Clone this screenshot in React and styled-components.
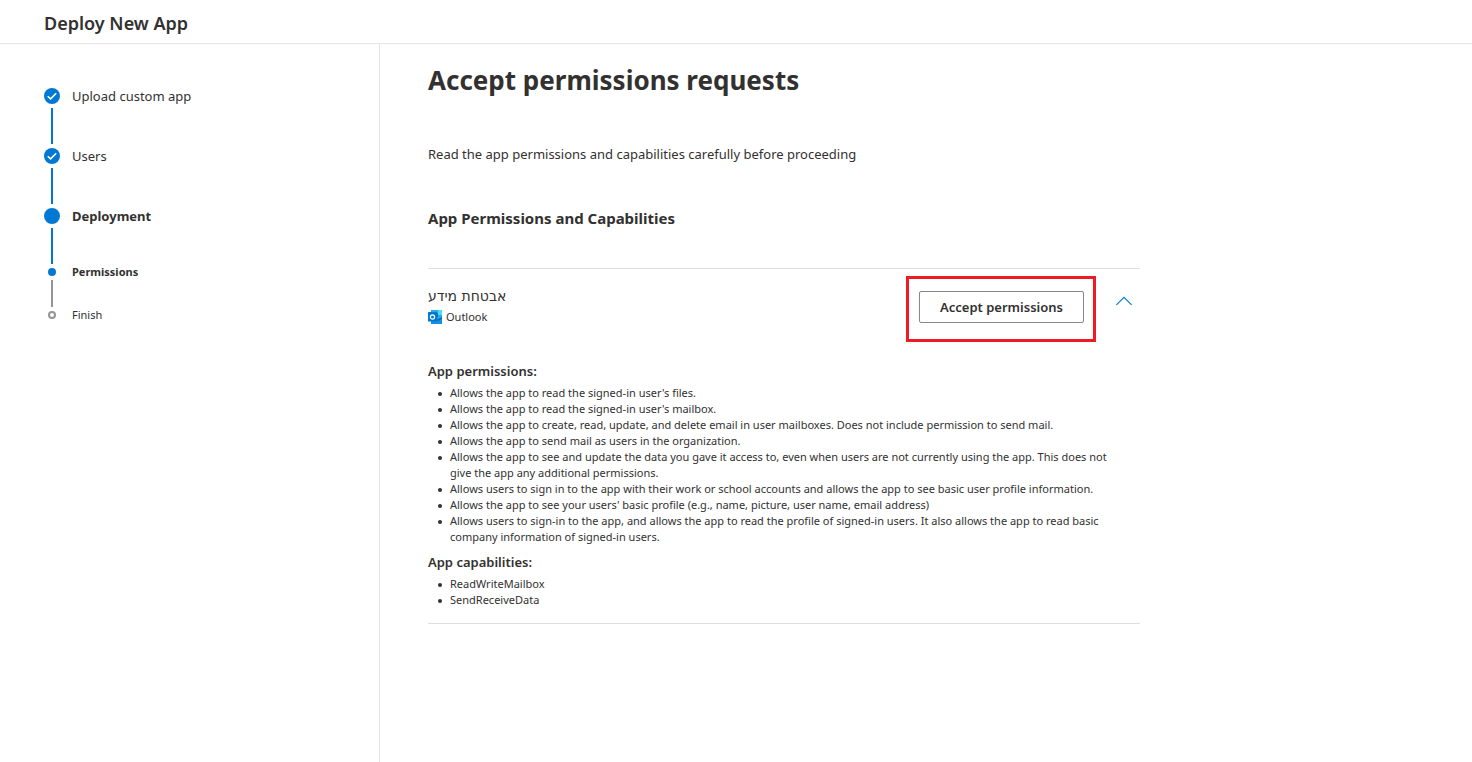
import React, { useState } from 'react';
import styled, { createGlobalStyle } from 'styled-components';

const steps = [
  { label: 'Upload custom app', state: 'done' },
  { label: 'Users', state: 'done' },
  { label: 'Deployment', state: 'current' },
  { label: 'Permissions', state: 'current', sub: true },
  { label: 'Finish', state: 'pending', sub: true },
];

const permissions = [
  "Allows the app to read the signed-in user's files.",
  "Allows the app to read the signed-in user's mailbox.",
  'Allows the app to create, read, update, and delete email in user mailboxes. Does not include permission to send mail.',
  'Allows the app to send mail as users in the organization.',
  'Allows the app to see and update the data you gave it access to, even when users are not currently using the app. This does not give the app any additional permissions.',
  'Allows users to sign in to the app with their work or school accounts and allows the app to see basic user profile information.',
  "Allows the app to see your users' basic profile (e.g., name, picture, user name, email address)",
  'Allows users to sign-in to the app, and allows the app to read the profile of signed-in users. It also allows the app to read basic company information of signed-in users.',
];

const capabilities = ['ReadWriteMailbox', 'SendReceiveData'];

const CheckIcon = () => (
  <svg width="16" height="16" viewBox="0 0 16 16" aria-hidden="true">
    <circle cx="8" cy="8" r="8" fill="#0078d4" />
    <path d="M3.7 8.2 6.6 10.9 12.2 5.3" fill="none" stroke="#fff" strokeWidth="1.5" />
  </svg>
);

const OutlookIcon = () => (
  <svg width="14" height="14" viewBox="0 0 14 14" aria-hidden="true">
    <path d="M3 0h11v14H3z" fill="#1490df" />
    <path d="M3 0h7v3H3z" fill="#28a8ea" />
    <path d="M10 0h4v5h-4z" fill="#50d9ff" />
    <path d="M8 3h2v4H8z" fill="#0078d4" />
    <path d="M10 5h4v2l-4 3z" fill="#28a8ea" />
    <path d="M14 7v1.5L10 11l-1-1z" fill="#0a5ea8" />
    <rect y="2" width="9" height="9.5" rx="0.6" fill="#0078d4" />
    <circle cx="4.5" cy="7" r="2.1" fill="none" stroke="#fff" strokeWidth="1.2" />
  </svg>
);

const ChevronIcon = ({ open }) => (
  <svg width="16" height="10" viewBox="0 0 16 10" aria-hidden="true">
    <path
      d={open ? 'M0.4 8.9 8 1.3l7.6 7.6' : 'M0.4 1.3 8 8.9l7.6-7.6'}
      fill="none"
      stroke="#0078d4"
      strokeWidth="1.1"
    />
  </svg>
);

const App = () => {
  const [open, setOpen] = useState(true);

  return (
    <Page>
      <GlobalStyle />
      <Header>
        <HeaderTitle>Deploy New App</HeaderTitle>
      </Header>
      <Body>
        <Sidebar>
          <StepList>
            {steps.map((step) => (
              <Step key={step.label} $sub={step.sub} $state={step.state}>
                <Marker>
                  {step.state === 'done' ? <CheckIcon /> : <Dot $sub={step.sub} $state={step.state} />}
                </Marker>
                {step.label}
              </Step>
            ))}
          </StepList>
        </Sidebar>
        <Main>
          <Title>Accept permissions requests</Title>
          <Intro>Read the app permissions and capabilities carefully before proceeding</Intro>
          <SectionTitle>App Permissions and Capabilities</SectionTitle>
          <AppCard>
            <CardHeader>
              <AppInfo>
                <AppName lang="he" dir="rtl">אבטחת מידע</AppName>
                <Host>
                  <OutlookIcon />
                  Outlook
                </Host>
              </AppInfo>
              <Highlight>
                <AcceptButton type="button">Accept permissions</AcceptButton>
              </Highlight>
              <ToggleButton
                type="button"
                aria-label="Toggle details"
                aria-expanded={open}
                onClick={() => setOpen(!open)}
              >
                <ChevronIcon open={open} />
              </ToggleButton>
            </CardHeader>
            {open && (
              <Details>
                <ListTitle>App permissions:</ListTitle>
                <List>
                  {permissions.map((text) => <ListItem key={text}>{text}</ListItem>)}
                </List>
                <ListTitle>App capabilities:</ListTitle>
                <List>
                  {capabilities.map((text) => <ListItem key={text}>{text}</ListItem>)}
                </List>
              </Details>
            )}
          </AppCard>
        </Main>
      </Body>
    </Page>
  );
};

export default App;

const GlobalStyle = createGlobalStyle`
  * {
    box-sizing: border-box;
  }
  body {
    margin: 0;
    background: #fff;
    color: #323130;
    font-family: "Segoe UI", "Noto Sans", "Open Sans", sans-serif;
    font-size: 13px;
  }
  h1, h2, h3, p, ul, ol {
    margin: 0;
    padding: 0;
  }
  button {
    font-family: inherit;
    color: inherit;
    cursor: pointer;
  }
  svg {
    display: block;
  }
`;

const Page = styled.div`
  display: flex;
  flex-direction: column;
  min-height: 100vh;
`;

const Header = styled.header`
  padding: 11px 44px 8px;
  border-bottom: 1px solid #e5e5e5;
`;

const HeaderTitle = styled.p`
  font-size: 18px;
  font-weight: 600;
  line-height: 24px;
`;

const Body = styled.div`
  display: flex;
  flex: 1;
`;

const Sidebar = styled.nav`
  flex: 0 0 380px;
  padding: 42px 44px;
  border-right: 1px solid #e5e5e5;
`;

const StepList = styled.ol`
  list-style: none;
`;

const Step = styled.li`
  display: flex;
  flex-wrap: wrap;
  align-items: center;
  gap: 2px 12px;
  line-height: ${({ $sub }) => ($sub ? 12 : 20)}px;
  font-size: ${({ $sub }) => ($sub ? 11 : 13)}px;
  font-weight: ${({ $state }) => ($state === 'current' ? 700 : 400)};

  /* connector down to the next step */
  &:not(:last-child)::after {
    content: "";
    flex: 0 0 2px;
    height: ${({ $sub }) => ($sub ? 27 : 36)}px;
    margin: 0 calc(100% - 9px) 2px 7px;
    background: ${({ $sub }) => ($sub ? '#979593' : '#0078d4')};
  }
`;

const Marker = styled.span`
  display: flex;
  justify-content: center;
  width: 16px;
`;

const Dot = styled.span`
  width: ${({ $sub }) => ($sub ? 8 : 16)}px;
  height: ${({ $sub }) => ($sub ? 8 : 16)}px;
  border: 2px solid ${({ $state }) => ($state === 'pending' ? '#979593' : '#0078d4')};
  border-radius: 50%;
  background: ${({ $state }) => ($state === 'pending' ? '#fff' : '#0078d4')};
`;

const Main = styled.main`
  flex: 1;
  max-width: 808px;
  padding: 18px 48px;
`;

const Title = styled.h1`
  font-size: 26px;
  font-weight: 700;
  line-height: 36px;
`;

const Intro = styled.p`
  margin-top: 46px;
  line-height: 20px;
`;

const SectionTitle = styled.h2`
  margin-top: 44px;
  font-size: 15px;
  font-weight: 700;
  line-height: 20px;
`;

const AppCard = styled.section`
  margin-top: 40px;
  padding-bottom: 15px;
  border-top: 1px solid #e1dfdd;
  border-bottom: 1px solid #e1dfdd;
`;

const CardHeader = styled.div`
  display: flex;
  align-items: flex-start;
  padding: 16px 0 34px;
`;

const AppInfo = styled.div`
  flex: 1;
`;

const AppName = styled.p`
  width: fit-content;
  font-family: "Segoe UI", "DejaVu Sans", sans-serif;
  font-size: 14px;
  line-height: 22px;
`;

const Host = styled.p`
  display: flex;
  align-items: center;
  gap: 4px;
  font-size: 11px;
  line-height: 20px;
`;

const Highlight = styled.div`
  position: relative;
  margin: 6px 24px 0 0;

  &::after {
    content: "";
    position: absolute;
    inset: -15px -12px -19px -13px;
    border: 3px solid #ed1c24;
    pointer-events: none;
  }
`;

const AcceptButton = styled.button`
  display: block;
  height: 32px;
  padding: 0 20px;
  border: 1px solid #8a8886;
  border-radius: 2px;
  background: #fff;
  font-size: 13px;
  font-weight: 600;
`;

const ToggleButton = styled.button`
  padding: 11px 8px;
  border: 0;
  background: none;
`;

const Details = styled.div`
  display: flex;
  flex-direction: column;
  gap: 4px;
`;

const ListTitle = styled.h3`
  font-size: 13px;
  font-weight: 600;
  line-height: 20px;
`;

const List = styled.ul`
  padding-right: 12px;
  font-size: 11px;
  line-height: 16px;
  list-style: none;

  & + ${ListTitle} {
    margin-top: 3px;
  }
`;

const ListItem = styled.li`
  display: flex;

  &::before {
    content: "";
    flex: 0 0 4px;
    height: 4px;
    margin: 7px 8px 0 10px;
    border-radius: 50%;
    background: #323130;
  }
`;
